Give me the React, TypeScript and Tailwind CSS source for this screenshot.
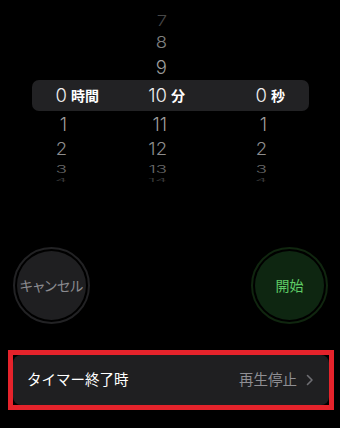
import React from 'react';

const font = { fontFamily: 'Inter, "Noto Sans CJK JP", sans-serif' };

interface WheelRow {
  h: string;
  cls: string;
  vals: [string, string, string];
}

const above: WheelRow[] = [
  { h: 'h-[20px]', cls: 'text-[#474747] scale-y-75', vals: ['', '7', ''] },
  { h: 'h-[23px]', cls: 'text-[#808080] scale-y-85', vals: ['', '8', ''] },
  { h: 'h-[26px]', cls: 'text-[#9c9c9c]', vals: ['', '9', ''] },
];

const below: WheelRow[] = [
  { h: 'h-[26px]', cls: 'text-[#9c9c9c]', vals: ['1', '11', '1'] },
  { h: 'h-[23px]', cls: 'text-[#8c8c8c] scale-y-95', vals: ['2', '12', '2'] },
  { h: 'h-[11px]', cls: 'text-[#6a6a6a] scale-y-55', vals: ['3', '13', '3'] },
  { h: 'h-[7px]', cls: 'text-[#3a3a3a] scale-y-25', vals: ['4', '14', '4'] },
];

function Row({ row }: { row: WheelRow }) {
  return (
    <div className={`grid grid-cols-[100px_100px_77px] ml-[32px] w-[277px] ${row.h}`}>
      {row.vals.map((v, i) => (
        <div key={i} className="flex items-center">
          <div className={`w-[35px] text-right text-[18.5px] font-light leading-none ${row.cls}`}>{v}</div>
        </div>
      ))}
    </div>
  );
}

function Picker() {
  const selected = [
    { n: '0', unit: '時間' },
    { n: '10', unit: '分' },
    { n: '0', unit: '秒' },
  ];
  return (
    <div className="pt-[11px]">
      {above.map((r, i) => (
        <Row key={i} row={r} />
      ))}
      <div className="grid grid-cols-[100px_100px_77px] ml-[32px] w-[277px] h-[31px] rounded-[7px] bg-[#222224]">
        {selected.map((s) => (
          <div key={s.unit} className="flex items-center">
            <div className="w-[35px] text-right text-[18.5px] font-light leading-none text-[#ededed]">{s.n}</div>
            <div className="ml-[4px] text-[14px] leading-none font-bold text-white">{s.unit}</div>
          </div>
        ))}
      </div>
      {below.map((r, i) => (
        <Row key={i} row={r} />
      ))}
    </div>
  );
}

export default function App() {
  return (
    <div className="w-[340px] h-[428px] bg-black overflow-hidden" style={font}>
      <Picker />

      <div className="mt-[69px] flex justify-between pl-[13px] pr-[12px]">
        <button className="w-[77px] h-[77px] rounded-full border-2 border-[#222224] p-[2px]">
          <div className="w-full h-full rounded-full bg-[#1f1f21] flex items-center justify-center text-[14px] text-[#8b8b90] [font-feature-settings:'palt']">
            キャンセル
          </div>
        </button>
        <button className="w-[77px] h-[77px] rounded-full border-2 border-[#10260f] p-[2px]">
          <div className="w-full h-full rounded-full bg-[#0e2611] flex items-center justify-center text-[14px] text-[#5fcc66]">
            開始
          </div>
        </button>
      </div>

      <div className="mt-[26px] ml-[8px] w-[326px] h-[60px] border-[5px] border-[#e5232b]">
        <div className="w-full h-full rounded-[8px] bg-[#1f1f21] flex items-center justify-between pl-[14px] pr-[15px]">
          <span className="text-[14.5px] text-white">タイマー終了時</span>
          <div className="flex items-center">
            <span className="text-[14.5px] text-[#8e8e93]">再生停止</span>
            <svg width="8" height="12" viewBox="0 0 8 12" className="ml-[9px]">
              <polyline points="1.5,1.5 6,6 1.5,10.5" fill="none" stroke="#6e6e73" strokeWidth="1.6" strokeLinecap="round" strokeLinejoin="round" />
            </svg>
          </div>
        </div>
      </div>
    </div>
  );
}
